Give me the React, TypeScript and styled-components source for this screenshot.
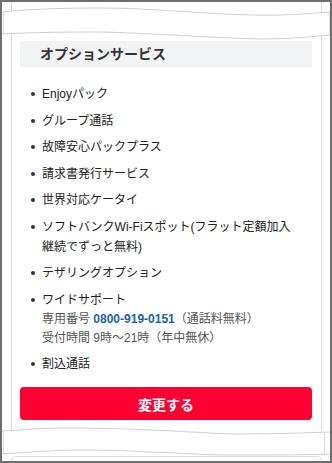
import styled, { createGlobalStyle } from 'styled-components';

const GlobalStyle = createGlobalStyle`
  body {
    margin: 0;
    background: #fff;
    font-family: 'Liberation Sans', 'Noto Sans CJK JP', sans-serif;
  }
`;

const Frame = styled.div`
  width: 332px;
  height: 463px;
  box-sizing: border-box;
  border: 2px solid #6e6e6e;
  background: #fff;
  overflow: hidden;
  display: flex;
  flex-direction: column;
`;

const TearSvg = styled.svg`
  display: block;
  flex-shrink: 0;
  width: 328px;
`;

const Card = styled.section`
  flex: 1;
  width: 311px;
  margin-left: 9px;
  box-sizing: border-box;
  padding: 0 9px 6px 8px;
  border-left: 1px solid #dcdcdc;
  border-right: 1px solid #dcdcdc;
  display: flex;
  flex-direction: column;
`;

const Heading = styled.h2`
  margin: 0;
  height: 26px;
  padding-left: 20px;
  background: #f2f3f4;
  color: #333;
  font-size: 14px;
  font-weight: 700;
  line-height: 26px;
`;

const List = styled.ul`
  list-style: none;
  margin: 17px 0 0;
  padding: 0;
  display: flex;
  flex-direction: column;
  gap: 6.5px;
`;

const Item = styled.li`
  display: flex;
  align-items: flex-start;
  color: #222;
  font-size: 12px;
  line-height: 20px;
`;

const Dot = styled.span`
  flex-shrink: 0;
  width: 4px;
  height: 4px;
  border-radius: 50%;
  background: #333;
  margin: 8px 7px 0 11px;
`;

const ItemBody = styled.div`
  display: flex;
  flex-direction: column;
`;

const Note = styled.p`
  margin: 0;
  color: #555;
  font-size: 12px;
  line-height: 19px;
`;

const Phone = styled.span`
  color: #1b62a5;
  font-weight: 700;
`;

const ChangeButton = styled.button`
  margin-top: 13px;
  height: 33px;
  width: 100%;
  border: none;
  border-radius: 4px;
  background: #ff0033;
  color: #fff;
  font-family: inherit;
  font-size: 14px;
  font-weight: 700;
  cursor: pointer;
`;

const line = { fill: 'none', stroke: '#cfcfcf', strokeWidth: 1 };
const edge = { fill: 'none', stroke: '#dcdcdc', strokeWidth: 1 };

const TopTear = () => (
  <TearSvg height={39} viewBox="0 0 328 39">
    <path d="M9.5 0 V9.5 M319.5 0 V10.8" {...edge} />
    <path d="M9.5 31.3 V39 M319.5 34.2 V39" {...edge} />
    <path d="M1.5 10 V32 M327.5 10 V33" {...edge} />
    <path d="M0 10 C30 7 60 6 98 6 C150 6 200 12 250 13 C290 14 310 11 328 10" {...line} />
    <path d="M0 32 C40 30 70 30 98 30 C150 31 210 36 258 37 C290 37 315 34 328 33" {...line} />
  </TearSvg>
);

const BottomTear = () => (
  <TearSvg height={35} viewBox="0 0 328 35">
    <path d="M9.5 0 V4.3 M319.5 0 V6.5" {...edge} />
    <path d="M1.5 5 V28 M322.5 6.5 V28.5" {...edge} />
    <path d="M0 5 C20 4 40 2 58 2 C100 2 130 3 148 4 C180 5 200 7 228 8 C270 8 300 7 328 6" {...line} />
    <path d="M0 28 C30 26 55 24 78 24 C110 24 130 25 148 26 C180 27 205 29 228 29 C270 29 300 29 328 28" {...line} />
    <path d="M9.5 36 V34.5 A4 4 0 0 1 13.5 30.5 H315.5 A4 4 0 0 1 319.5 34.5 V36" {...edge} />
  </TearSvg>
);

const options = [
  'Enjoyパック',
  'グループ通話',
  '故障安心パックプラス',
  '請求書発行サービス',
  '世界対応ケータイ',
];

const App = () => (
  <>
    <GlobalStyle />
    <Frame>
      <TopTear />
      <Card>
        <Heading>オプションサービス</Heading>
        <List>
          {options.map((name) => (
            <Item key={name}>
              <Dot />
              <ItemBody>{name}</ItemBody>
            </Item>
          ))}
          <Item>
            <Dot />
            <ItemBody>
              ソフトバンクWi-Fiスポット(フラット定額加入
              <br />
              継続でずっと無料)
            </ItemBody>
          </Item>
          <Item>
            <Dot />
            <ItemBody>テザリングオプション</ItemBody>
          </Item>
          <Item>
            <Dot />
            <ItemBody>
              ワイドサポート
              <Note>
                専用番号 <Phone>0800-919-0151</Phone>（通話料無料）
              </Note>
              <Note>受付時間 9時〜21時（年中無休）</Note>
            </ItemBody>
          </Item>
          <Item>
            <Dot />
            <ItemBody>割込通話</ItemBody>
          </Item>
        </List>
        <ChangeButton>変更する</ChangeButton>
      </Card>
      <BottomTear />
    </Frame>
  </>
);

export default App;
